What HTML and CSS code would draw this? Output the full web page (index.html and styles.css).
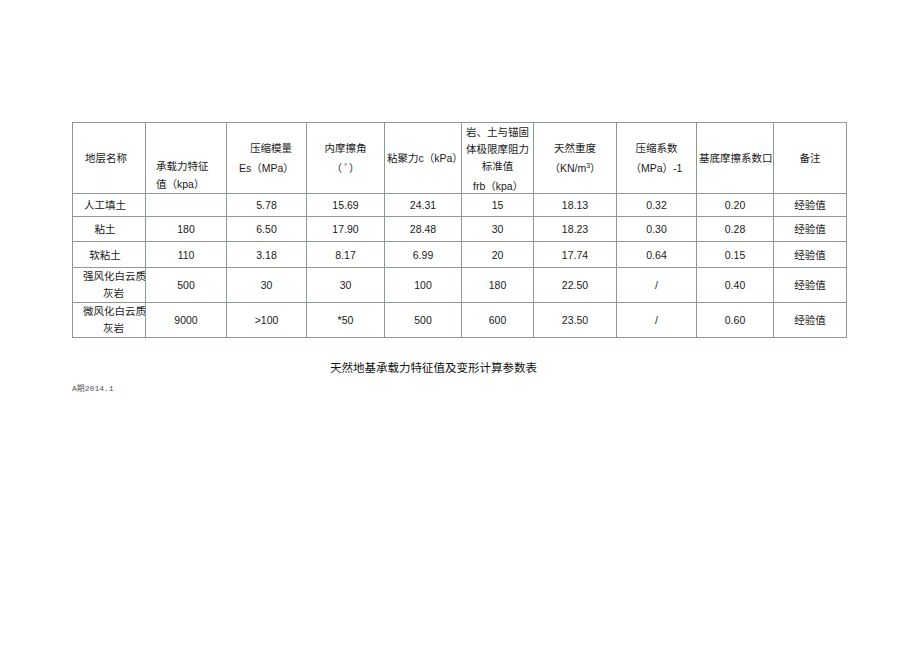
FILE: index.html
```html
<!DOCTYPE html>
<html lang="zh">
<head>
<meta charset="utf-8">
<title>天然地基承载力特征值及变形计算参数表</title>
<link rel="stylesheet" href="styles.css">
</head>
<body>
<div class="page">
  <table class="params">
    <colgroup>
      <col class="w73"><col class="w81"><col class="w80"><col class="w78"><col class="w77">
      <col class="w72"><col class="w83"><col class="w80"><col class="w77"><col class="w73">
    </colgroup>
    <tr class="head">
      <td class="h-left">地层名称</td>
      <td class="h-bottom"><div>承载力特征</div><div>值（kpa）</div></td>
      <td class="h-es"><div class="i1">压缩模量</div><div class="i2">Es（MPa）</div></td>
      <td class="h-center"><div>内摩擦角</div><div>（<sup class="deg">°</sup>）</div></td>
      <td class="h-tight">粘聚力c（kPa）</td>
      <td class="h-top"><div class="l">岩、土与锚固</div><div class="l">体极限摩阻力</div><div class="l">标准值</div><div class="frb">frb（kpa）</div></td>
      <td class="h-center"><div>天然重度</div><div>（KN/m<sup class="sup">3</sup>）</div></td>
      <td class="h-center"><div>压缩系数</div><div>（MPa）-1</div></td>
      <td class="h-tight">基底摩擦系数口</td>
      <td class="h-center">备注</td>
    </tr>
    <tr class="r1">
      <td class="name">人工填土</td><td></td><td>5.78</td><td>15.69</td><td>24.31</td><td>15</td><td>18.13</td><td>0.32</td><td>0.20</td><td>经验值</td>
    </tr>
    <tr class="r2">
      <td class="name">粘土</td><td>180</td><td>6.50</td><td>17.90</td><td>28.48</td><td>30</td><td>18.23</td><td>0.30</td><td>0.28</td><td>经验值</td>
    </tr>
    <tr class="r3">
      <td class="name">软粘土</td><td>110</td><td>3.18</td><td>8.17</td><td>6.99</td><td>20</td><td>17.74</td><td>0.64</td><td>0.15</td><td>经验值</td>
    </tr>
    <tr class="r4">
      <td class="name2"><div>强风化白云质</div><div class="sub">灰岩</div></td><td>500</td><td>30</td><td>30</td><td>100</td><td>180</td><td>22.50</td><td>/</td><td>0.40</td><td>经验值</td>
    </tr>
    <tr class="r5">
      <td class="name2"><div>微风化白云质</div><div class="sub">灰岩</div></td><td>9000</td><td>&gt;100</td><td>*50</td><td>500</td><td>600</td><td>23.50</td><td>/</td><td>0.60</td><td>经验值</td>
    </tr>
  </table>
  <div class="title">天然地基承载力特征值及变形计算参数表</div>
  <div class="date">A期2014.1</div>
</div>
</body>
</html>
```
FILE: styles.css
```css
html, body {
  margin: 0;
  padding: 0;
  background: #ffffff;
}

body {
  font-family: "Liberation Sans", "Noto Sans CJK SC", sans-serif;
  color: #1a1a1a;
  font-size: 10.5px;
}

.page {
  padding: 122px 0 0 72px;
}

.params {
  border-collapse: collapse;
  table-layout: fixed;
  width: 774px;
}

.w73 { width: 73px; }
.w81 { width: 81px; }
.w80 { width: 80px; }
.w78 { width: 78px; }
.w77 { width: 77px; }
.w72 { width: 72px; }
.w83 { width: 83px; }

.params td {
  border: 1px solid #8f9a8f;
  padding: 0;
  text-align: center;
  vertical-align: middle;
  line-height: 14px;
  white-space: nowrap;
  overflow: hidden;
}

.head { height: 71px; }
.r1 { height: 23px; }
.r2 { height: 25px; }
.r3 { height: 26px; }
.r4 { height: 34px; }
.r5 { height: 35px; }

.head td { line-height: 20px; }

.params td.h-left {
  text-align: left;
  padding-left: 12px;
}

.params td.h-bottom {
  text-align: left;
  vertical-align: bottom;
  padding-left: 10px;
  line-height: 18px;
}

.params td.h-es {
  text-align: left;
}
.h-es .i1 { padding-left: 23px; }
.h-es .i2 { padding-left: 12px; }

.params td.h-tight {
  text-align: left;
  padding-left: 2px;
}

.params td.h-top {
  vertical-align: top;
  padding-top: 1px;
  line-height: 17px;
}
.h-top .frb {
  text-align: left;
  padding-left: 11px;
  margin-top: 4px;
  line-height: 14px;
}

.deg {
  font-size: 8px;
  vertical-align: 3px;
  line-height: 0;
  padding: 0 2px;
}

.sup {
  font-size: 7px;
  vertical-align: 4px;
  line-height: 0;
}

.params td.name {
  padding-right: 8px;
}

.params td.name2 {
  text-align: left;
  padding-left: 10px;
  line-height: 17px;
}
.name2 .sub { padding-left: 20px; }

.title {
  margin: 23px 0 0 258px;
  font-size: 11.5px;
  line-height: 14px;
  color: #111;
}

.date {
  margin-top: 9px;
  font-family: "Liberation Mono", "Noto Sans CJK SC", monospace;
  font-size: 8px;
  line-height: 10px;
  color: #555;
}
```
